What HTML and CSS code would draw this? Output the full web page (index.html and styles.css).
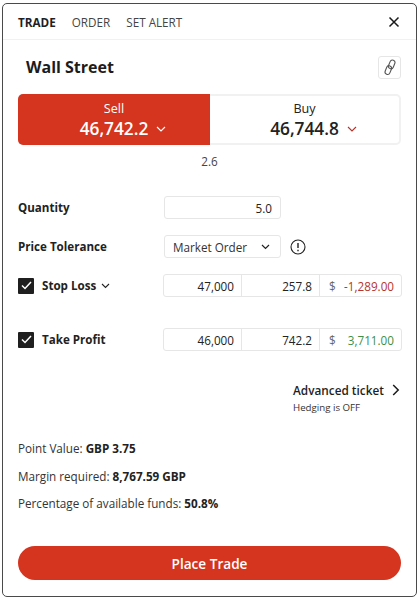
FILE: index.html
```html
<!DOCTYPE html>
<html lang="en">
<head>
    <meta charset="UTF-8">
    <title>Trade ticket</title>
    <link rel="stylesheet" href="styles.css">
</head>
<body>
    <div class="ticket">
        <div class="tabs">
            <span class="tab active">TRADE</span>
            <span class="tab">ORDER</span>
            <span class="tab">SET ALERT</span>
            <svg class="close" width="12" height="12" viewBox="0 0 12 12"><path d="M1.500 1.500l9 9M10.500 1.500l-9 9" stroke="#1a1a1a" stroke-width="1.500" fill="none"/></svg>
        </div>

        <div class="title-row">
            <h1>Wall Street</h1>
            <div class="link-button">
                <svg width="14" height="17" viewBox="0 0 14 17" fill="none" stroke="#555" stroke-width="1.100">
                    <rect x="6.200" y="0.900" width="5" height="9" rx="2.500" transform="rotate(22 8.700 5.400)"/>
                    <rect x="2.800" y="6.600" width="5" height="9" rx="2.500" transform="rotate(22 5.300 11.100)"/>
                </svg>
            </div>
        </div>

        <div class="prices">
            <div class="price sell">
                <span class="price-label">Sell</span>
                <span class="price-value">46,742.2
                    <svg width="10" height="6" viewBox="0 0 10 6"><path d="M1 1l4 4 4-4" stroke="#fff" stroke-width="1.100" fill="none"/></svg>
                </span>
            </div>
            <div class="price buy">
                <span class="price-label">Buy</span>
                <span class="price-value">46,744.8
                    <svg width="10" height="6" viewBox="0 0 10 6"><path d="M1 1l4 4 4-4" stroke="#b5322a" stroke-width="1.100" fill="none"/></svg>
                </span>
            </div>
        </div>
        <div class="spread">2.6</div>

        <div class="row quantity-row">
            <label class="row-label">Quantity</label>
            <div class="field quantity">5.0</div>
        </div>

        <div class="row tolerance-row">
            <label class="row-label">Price Tolerance</label>
            <div class="field select">
                <span>Market Order</span>
                <svg width="9" height="6" viewBox="0 0 9 6"><path d="M1 1l3.500 3.500L8 1" stroke="#222" stroke-width="1.200" fill="none"/></svg>
            </div>
            <svg class="info" width="16" height="16" viewBox="0 0 16 16" fill="none" stroke="#222" stroke-width="1.100">
                <circle cx="8" cy="8" r="7"/>
                <path d="M8 4v5M8 10.800v1.400" stroke-width="1.400"/>
            </svg>
        </div>

        <div class="row stop-row">
            <div class="check-label">
                <span class="checkbox"><svg width="11" height="9" viewBox="0 0 11 9"><path d="M1 4.500l3 3 6-6.500" stroke="#fff" stroke-width="1.500" fill="none"/></svg></span>
                <span class="row-label">Stop Loss</span>
                <svg class="label-arrow" width="9" height="6" viewBox="0 0 9 6"><path d="M1 1l3.500 3.500L8 1" stroke="#222" stroke-width="1.100" fill="none"/></svg>
            </div>
            <div class="group">
                <div class="cell level">47,000</div>
                <div class="cell points">257.8</div>
                <div class="cell amount"><span class="currency">$</span><span class="loss">-1,289.00</span></div>
            </div>
        </div>

        <div class="row profit-row">
            <div class="check-label">
                <span class="checkbox"><svg width="11" height="9" viewBox="0 0 11 9"><path d="M1 4.500l3 3 6-6.500" stroke="#fff" stroke-width="1.500" fill="none"/></svg></span>
                <span class="row-label">Take Profit</span>
            </div>
            <div class="group">
                <div class="cell level">46,000</div>
                <div class="cell points">742.2</div>
                <div class="cell amount"><span class="currency">$</span><span class="profit">3,711.00</span></div>
            </div>
        </div>

        <div class="advanced">
            <div class="advanced-link">Advanced ticket
                <svg width="8" height="12" viewBox="0 0 8 12"><path d="M1.200 1l5 5-5 5" stroke="#1a1a1a" stroke-width="1.500" fill="none"/></svg>
            </div>
            <div class="hedging">Hedging is OFF</div>
        </div>

        <div class="facts">
            <p>Point Value: <strong>GBP 3.75</strong></p>
            <p>Margin required: <strong>8,767.59 GBP</strong></p>
            <p>Percentage of available funds: <strong>50.8%</strong></p>
        </div>

        <button class="place-trade">Place Trade</button>
    </div>
</body>
</html>
```

FILE: styles.css
```css
* {
    box-sizing: border-box;
}
html, body {
    margin: 0;
    padding: 0;
    background: #fff;
}
body {
    font-family: "Open Sans", sans-serif;
    color: #222;
    padding: 3px 2px;
}
.ticket {
    width: 415px;
    height: 594px;
    border: 1px solid #4a4a4a;
    border-radius: 5px;
    background: #fff;
    padding: 0 15px;
}
.tabs {
    display: flex;
    align-items: center;
    gap: 16px;
    height: 36px;
    margin: 0 -15px;
    padding: 1px 15px 0;
    border-bottom: 1px solid #f1f1f1;
    font-size: 11.700px;
}
.tab {
    color: #444;
}
.tab.active {
    color: #1f1f1f;
    font-weight: 700;
}
.close {
    margin-left: auto;
    margin-right: 1px;
}
.title-row {
    display: flex;
    align-items: center;
    justify-content: space-between;
    height: 38px;
    margin-top: 8px;
    padding-left: 8px;
}
h1 {
    margin: 0;
    font-size: 16px;
    font-weight: 700;
    color: #1c1c1c;
}
.link-button {
    display: flex;
    align-items: center;
    justify-content: center;
    width: 23px;
    height: 23px;
    border: 1px solid #e6e6e6;
    border-radius: 3px;
}
.prices {
    display: flex;
    width: 383px;
    height: 51px;
    margin-top: 8px;
}
.price {
    display: flex;
    flex-direction: column;
    align-items: center;
    padding-top: 6px;
}
.price-label {
    font-size: 12.600px;
    line-height: 17px;
}
.price-value {
    display: flex;
    align-items: center;
    gap: 8px;
    font-size: 17.300px;
    font-weight: 600;
    line-height: 23px;
}
/* the arrow hangs off the number, which stays centred under the label */
.price-value svg {
    margin-right: -18px;
}
.sell {
    flex: 0 0 192px;
    background: #d5341e;
    color: #fff;
    border-radius: 5px 0 0 5px;
}
.buy {
    flex: 1;
    padding-top: 4px;
    border: 2px solid #f1f1f1;
    border-left: 0;
    border-radius: 0 5px 5px 0;
    color: #222;
}
.spread {
    width: 383px;
    margin-top: 8px;
    text-align: center;
    font-size: 11.700px;
    line-height: 17px;
    color: #444;
}
.row {
    display: flex;
    align-items: center;
}
.row-label {
    font-size: 11.600px;
    font-weight: 700;
    color: #222;
}
.row > .row-label {
    width: 146px;
}
.field {
    display: flex;
    align-items: center;
    width: 117px;
    height: 23px;
    border: 1px solid #e6e6e6;
    border-radius: 3px;
    font-size: 11.700px;
}
.quantity-row {
    margin-top: 26px;
}
.quantity {
    justify-content: flex-end;
    padding-right: 8px;
}
.tolerance-row {
    margin-top: 16px;
}
.select {
    justify-content: space-between;
    padding: 0 10px 0 8px;
    color: #333;
}
.info {
    margin-left: 9px;
}
.stop-row {
    margin-top: 16px;
}
.profit-row {
    margin-top: 31px;
}
.check-label {
    flex: 0 0 145px;
    display: flex;
    align-items: center;
}
.checkbox {
    display: flex;
    align-items: center;
    justify-content: center;
    width: 16px;
    height: 16px;
    margin-right: 8px;
    border-radius: 1px;
    background: #1f1f1f;
}
.label-arrow {
    margin-left: 5px;
}
.group {
    flex: 0 0 239px;
    display: flex;
    height: 23px;
    border: 1px solid #e6e6e6;
    border-radius: 3px;
    font-size: 11.700px;
}
.cell {
    display: flex;
    align-items: center;
    justify-content: flex-end;
    padding-right: 7px;
    border-right: 1px solid #e6e6e6;
}
.level {
    width: 78px;
}
.points {
    width: 78px;
}
.amount {
    flex: 1;
    justify-content: space-between;
    padding: 0 7px 0 9px;
    border-right: 0;
}
.currency {
    color: #666;
}
.loss {
    color: #b5352c;
}
.profit {
    color: #3f8f45;
}
.advanced {
    margin-top: 30px;
    margin-left: 275px;
}
.advanced-link {
    display: flex;
    align-items: center;
    gap: 8px;
    white-space: nowrap;
    font-size: 11.800px;
    font-weight: 600;
    color: #1f1f1f;
    line-height: 18px;
}
.hedging {
    margin-top: 1px;
    font-size: 9.700px;
    line-height: 16px;
    color: #333;
}
.facts {
    margin-top: 24px;
    font-size: 11.700px;
    color: #333;
}
.facts p {
    margin: 0 0 10.500px;
    line-height: 17px;
}
.facts strong {
    color: #222;
}
.place-trade {
    display: block;
    width: 383px;
    height: 34px;
    margin-top: 34px;
    border: none;
    border-radius: 17px;
    background: #d5341e;
    color: #fff;
    font-family: inherit;
    font-size: 13.600px;
    font-weight: 600;
}
```
